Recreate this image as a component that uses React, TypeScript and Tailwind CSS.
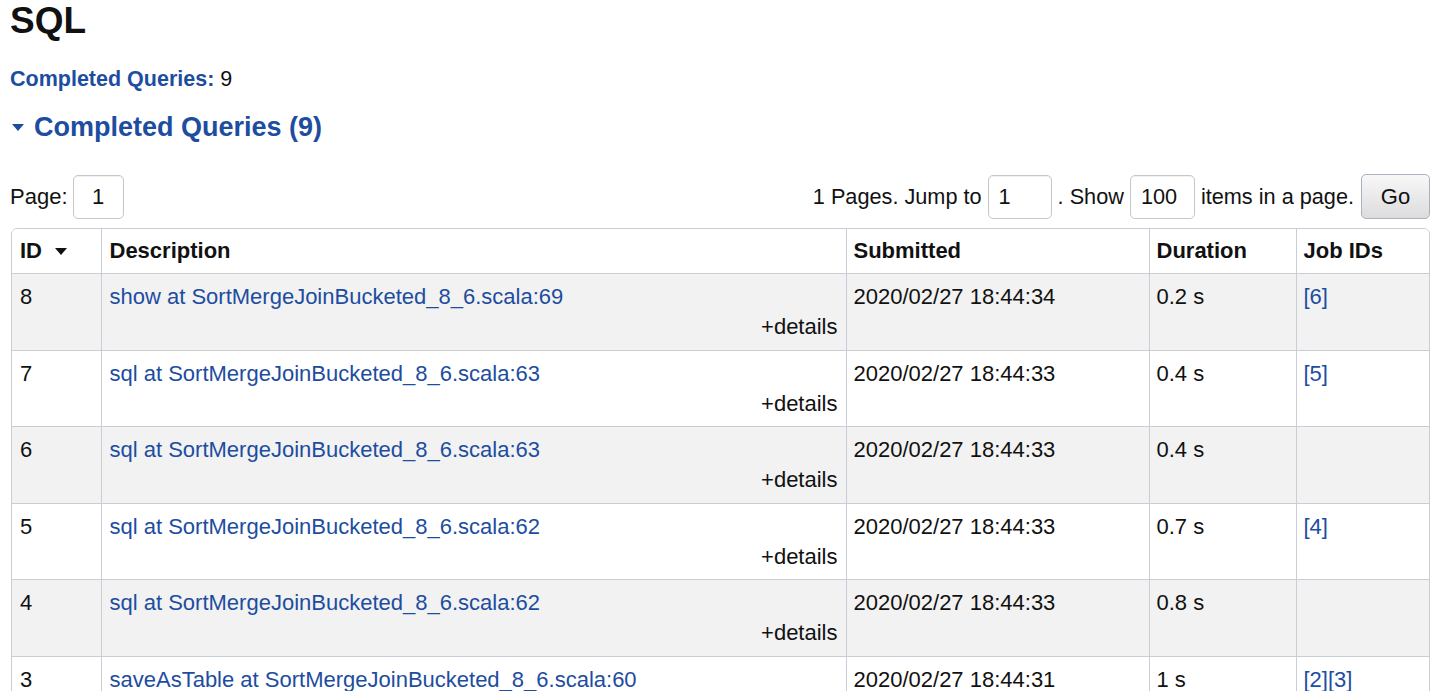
import React from 'react';

type Query = { id: number; desc: string; submitted: string; duration: string; jobs: number[] };

const queries: Query[] = [
  { id: 8, desc: 'show at SortMergeJoinBucketed_8_6.scala:69', submitted: '2020/02/27 18:44:34', duration: '0.2 s', jobs: [6] },
  { id: 7, desc: 'sql at SortMergeJoinBucketed_8_6.scala:63', submitted: '2020/02/27 18:44:33', duration: '0.4 s', jobs: [5] },
  { id: 6, desc: 'sql at SortMergeJoinBucketed_8_6.scala:63', submitted: '2020/02/27 18:44:33', duration: '0.4 s', jobs: [] },
  { id: 5, desc: 'sql at SortMergeJoinBucketed_8_6.scala:62', submitted: '2020/02/27 18:44:33', duration: '0.7 s', jobs: [4] },
  { id: 4, desc: 'sql at SortMergeJoinBucketed_8_6.scala:62', submitted: '2020/02/27 18:44:33', duration: '0.8 s', jobs: [] },
  { id: 3, desc: 'saveAsTable at SortMergeJoinBucketed_8_6.scala:60', submitted: '2020/02/27 18:44:31', duration: '1 s', jobs: [2, 3] },
];

const DownCaret: React.FC<{ className?: string }> = ({ className }) => (
  <svg className={className} width="12" height="7" viewBox="0 0 12 7">
    <path d="M0 0 L12 0 L6 7 Z" fill="currentColor" />
  </svg>
);

const PageInput: React.FC<{ value: string; width: string; center?: boolean }> = ({ value, width, center }) => (
  <div
    className={`${width} h-[44px] border border-[#c4c8ce] rounded-[5px] bg-white flex items-center shadow-[inset_0_1px_1px_rgba(0,0,0,0.06)] ${
      center ? 'justify-center' : 'pl-[10px]'
    }`}
  >
    {value}
  </div>
);

const App: React.FC = () => {
  return (
    <div className="min-h-screen bg-white text-[#111] font-['Liberation_Sans',Arial,sans-serif] text-[22px] leading-[30px] px-[10px]">
      <h1 className="text-[37px] leading-[40px] font-bold mt-[1px]">SQL</h1>

      <div className="mt-[23px] text-[21.5px]">
        <span className="font-bold text-[#1d4d9f]">Completed Queries:</span> 9
      </div>

      <div className="mt-[15px] flex items-center text-[#1d4d9f] font-bold text-[27px] leading-[36px]">
        <DownCaret className="ml-[2px] mr-[10px] mt-[1px]" />
        <span>Completed Queries (9)</span>
      </div>

      <div className="mt-[29px] flex items-center justify-between">
        <div className="flex items-center gap-[5px]">
          <span>Page:</span>
          <PageInput value="1" width="w-[51px]" center />
        </div>
        <div className="flex items-center gap-[6px] text-[21.7px]">
          <span>1 Pages. Jump to</span>
          <PageInput value="1" width="w-[64px]" />
          <span>. Show</span>
          <PageInput value="100" width="w-[65px]" />
          <span>items in a page.</span>
          <button className="ml-[1px] w-[69px] h-[45px] rounded-[5px] border border-[#a9b1c0] bg-gradient-to-b from-[#f8f8f8] to-[#dcdcdc] text-[22px] text-[#111]">
            Go
          </button>
        </div>
      </div>

      <div className="mt-[9px] ml-[1px] border border-[#c9ced6] rounded-t-[6px] overflow-hidden">
        <table className="w-full border-collapse table-fixed">
          <colgroup>
            <col className="w-[89px]" />
            <col className="w-[745px]" />
            <col className="w-[303px]" />
            <col className="w-[147px]" />
            <col />
          </colgroup>
          <thead>
            <tr className="bg-white font-bold text-left">
              <th className="px-[8px] py-[7px] border-b border-[#c9ced6]">
                <span className="flex items-center gap-[13px]">
                  ID <DownCaret />
                </span>
              </th>
              <th className="px-[8px] py-[7px] border-b border-l border-[#c9ced6]">Description</th>
              <th className="px-[7px] py-[7px] border-b border-l border-[#c9ced6]">Submitted</th>
              <th className="px-[7px] py-[7px] border-b border-l border-[#c9ced6]">Duration</th>
              <th className="px-[7px] py-[7px] border-b border-l border-[#c9ced6]">Job IDs</th>
            </tr>
          </thead>
          <tbody>
            {queries.map((q, i) => (
              <tr key={q.id} className={`${i % 2 === 0 ? 'bg-[#f2f2f2]' : 'bg-white'} align-top`}>
                <td className="px-[8px] pt-[8px] pb-[7.6px] border-b border-[#c9ced6]">{q.id}</td>
                <td className="px-[8px] pt-[8px] pb-[7.6px] border-b border-l border-[#c9ced6]">
                  <div className="text-[#1d4d9f]">{q.desc}</div>
                  <div className="text-right">+details</div>
                </td>
                <td className="px-[7px] pt-[8px] pb-[7.6px] border-b border-l border-[#c9ced6]">{q.submitted}</td>
                <td className="px-[7px] pt-[8px] pb-[7.6px] border-b border-l border-[#c9ced6]">{q.duration}</td>
                <td className="px-[7px] pt-[8px] pb-[7.6px] border-b border-l border-[#c9ced6] text-[#1d4d9f]">
                  {q.jobs.map((j) => `[${j}]`).join('')}
                </td>
              </tr>
            ))}
          </tbody>
        </table>
      </div>
    </div>
  );
};

export default App;
